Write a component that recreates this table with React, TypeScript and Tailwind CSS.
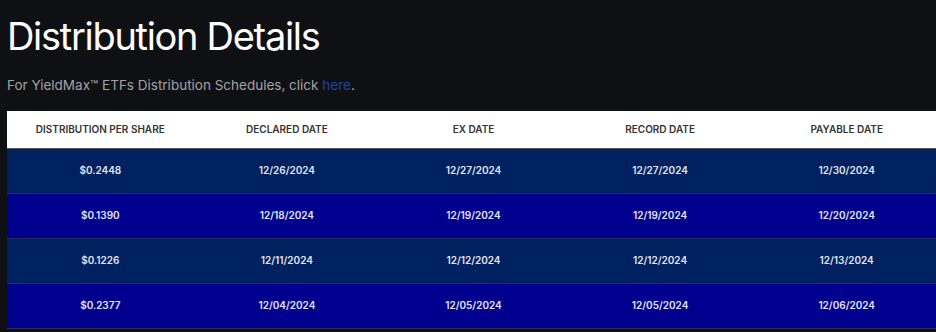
const rows = [
  { amount: '$0.2448', declared: '12/26/2024', ex: '12/27/2024', record: '12/27/2024', payable: '12/30/2024' },
  { amount: '$0.1390', declared: '12/18/2024', ex: '12/19/2024', record: '12/19/2024', payable: '12/20/2024' },
  { amount: '$0.1226', declared: '12/11/2024', ex: '12/12/2024', record: '12/12/2024', payable: '12/13/2024' },
  { amount: '$0.2377', declared: '12/04/2024', ex: '12/05/2024', record: '12/05/2024', payable: '12/06/2024' },
]

const headers = ['Distribution per share', 'Declared Date', 'Ex Date', 'Record Date', 'Payable Date']

export default function App() {
  return (
    <main className="h-[332px] w-[936px] overflow-hidden bg-[#0f1014] font-['Inter',sans-serif]">
      <div className="pl-[7px] pt-[12px]">
        <h1 className="text-[38px] leading-[48px] font-normal text-white tracking-[-1.3px]">Distribution Details</h1>
        <p className="mt-[16px] text-[13.5px] leading-[18px] text-[#a3a3a3]">
          For YieldMax™ ETFs Distribution Schedules, click <a href="#" className="text-[#1e40af]">here</a>.
        </p>
      </div>
      <div className="mt-[17px] pl-[7px]">
        <table className="w-[933px] table-fixed border-collapse">
          <thead>
            <tr className="bg-white">
              {headers.map(h => (
                <th key={h} className="h-[37px] border-b border-[#555] text-center text-[10px] font-semibold uppercase text-[#333]">
                  {h}
                </th>
              ))}
            </tr>
          </thead>
          <tbody>
            {rows.map((r, i) => (
              <tr key={r.amount} className={i % 2 === 0 ? 'bg-[#00215f]' : 'bg-[#00008f]'}>
                {[r.amount, r.declared, r.ex, r.record, r.payable].map((v, j) => (
                  <td key={j} className="h-[45px] border-b border-[#2b2a5c] text-center text-[10px] font-semibold text-[#e2e4f0]">
                    {v}
                  </td>
                ))}
              </tr>
            ))}
          </tbody>
        </table>
      </div>
    </main>
  )
}
